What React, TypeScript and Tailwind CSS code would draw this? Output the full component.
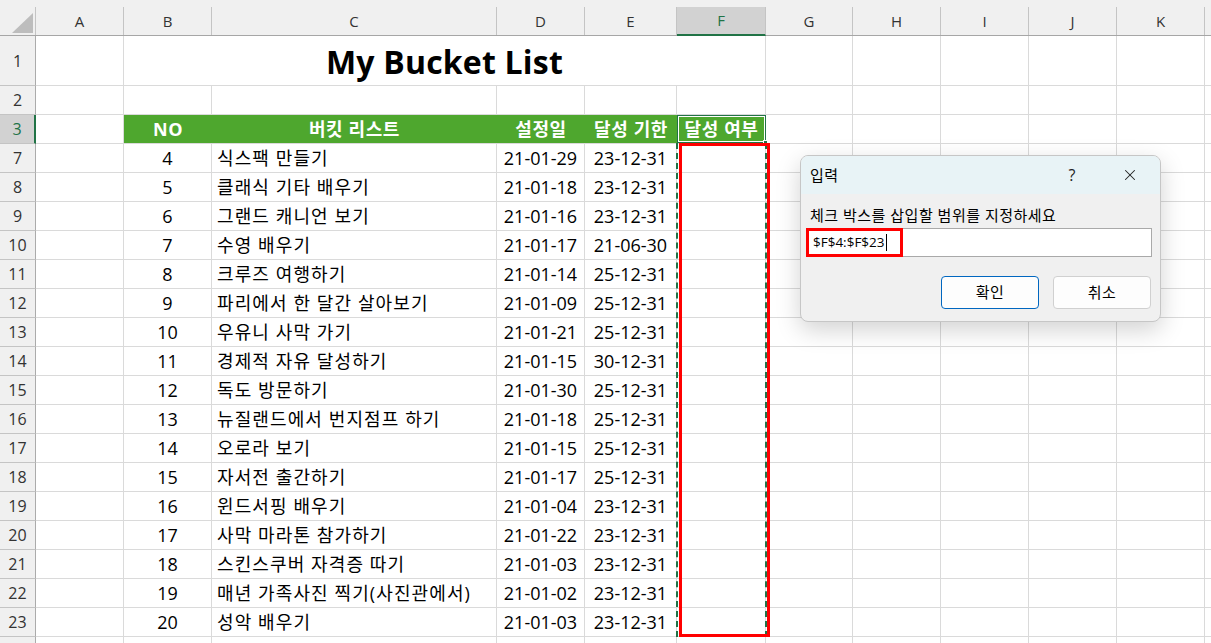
import { X } from 'lucide-react'

// Excel sheet with "Bucket List" table and an input dialog on top

const font = "font-['Open_Sans','Noto_Sans_CJK_KR',sans-serif]"

const headCols = [
  { id: 'A', w: 'w-[88px]' },
  { id: 'B', w: 'w-[88px]' },
  { id: 'C', w: 'w-[285px]' },
  { id: 'D', w: 'w-[88px]' },
  { id: 'E', w: 'w-[92px]' },
  { id: 'F', w: 'w-[89px]' },
  { id: 'G', w: 'w-[87px]' },
  { id: 'H', w: 'w-[88px]' },
  { id: 'I', w: 'w-[88px]' },
  { id: 'J', w: 'w-[88px]' },
  { id: 'K', w: 'w-[88px]' },
]

const rightCols = ['w-[87px]', 'w-[88px]', 'w-[88px]', 'w-[88px]', 'w-[88px]']

const items: [number, number, string, string, string][] = [
  [7, 4, '식스팩 만들기', '21-01-29', '23-12-31'],
  [8, 5, '클래식 기타 배우기', '21-01-18', '23-12-31'],
  [9, 6, '그랜드 캐니언 보기', '21-01-16', '23-12-31'],
  [10, 7, '수영 배우기', '21-01-17', '21-06-30'],
  [11, 8, '크루즈 여행하기', '21-01-14', '25-12-31'],
  [12, 9, '파리에서 한 달간 살아보기', '21-01-09', '25-12-31'],
  [13, 10, '우유니 사막 가기', '21-01-21', '25-12-31'],
  [14, 11, '경제적 자유 달성하기', '21-01-15', '30-12-31'],
  [15, 12, '독도 방문하기', '21-01-30', '25-12-31'],
  [16, 13, '뉴질랜드에서 번지점프 하기', '21-01-18', '25-12-31'],
  [17, 14, '오로라 보기', '21-01-15', '25-12-31'],
  [18, 15, '자서전 출간하기', '21-01-17', '25-12-31'],
  [19, 16, '윈드서핑 배우기', '21-01-04', '23-12-31'],
  [20, 17, '사막 마라톤 참가하기', '21-01-22', '23-12-31'],
  [21, 18, '스킨스쿠버 자격증 따기', '21-01-03', '23-12-31'],
  [22, 19, '매년 가족사진 찍기(사진관에서)', '21-01-02', '23-12-31'],
  [23, 20, '성악 배우기', '21-01-03', '23-12-31'],
]

function RowHead({ n, selected }: { n?: number; selected?: boolean }) {
  return (
    <div
      className={`w-[36px] shrink-0 h-full flex items-center justify-center text-[16px] border-b border-[#c4c4c4] ${
        selected
          ? 'bg-[#d2d2d2] text-[#217346] border-r-2 border-r-[#217346]'
          : 'bg-[#f0f0f0] text-[#333] border-r border-r-[#ababab]'
      }`}
    >
      {n}
    </div>
  )
}

function Cell({ w, children, className = '' }: { w: string; children?: React.ReactNode; className?: string }) {
  return (
    <div className={`${w} shrink-0 h-full border-r border-b border-[#dadada] flex items-center ${className}`}>
      {children}
    </div>
  )
}

function RightCells() {
  return (
    <>
      {rightCols.map((w, i) => (
        <Cell key={i} w={w} />
      ))}
      <div className="flex-1 h-full border-b border-[#dadada]" />
    </>
  )
}

export default function App() {
  return (
    <div className={`relative w-[1211px] h-[643px] overflow-hidden bg-white text-black ${font}`}>
      {/* column headers */}
      <div className="flex h-[36px] bg-[#f0f0f0] border-b border-[#a6a6a6]">
        <div className="w-[36px] shrink-0 flex flex-col">
          <div className="h-[7px]" />
          <div className="flex-1 border-r border-[#c4c4c4] flex items-end justify-end p-[2px]">
            <div className="w-0 h-0 border-l-[21px] border-l-transparent border-b-[20px] border-b-[#bdbdbd]" />
          </div>
        </div>
        {headCols.map((c) => (
          <div key={c.id} className={`${c.w} shrink-0 flex flex-col`}>
            <div className="h-[7px]" />
            <div
              className={`flex-1 flex items-center justify-center text-[15px] border-r border-[#c4c4c4] ${
                c.id === 'F' ? 'bg-[#d2d2d2] text-[#217346] border-b-2 border-b-[#217346] -mb-px' : 'text-[#333]'
              }`}
            >
              {c.id}
            </div>
          </div>
        ))}
        <div className="flex-1 flex flex-col">
          <div className="h-[7px]" />
          <div className="flex-1" />
        </div>
      </div>

      {/* row 1 */}
      <div className="flex h-[50px]">
        <RowHead n={1} />
        <Cell w="w-[88px]" />
        <Cell w="w-[642px]" className="justify-center">
          <span className="text-[32px] font-bold leading-none pt-[2px] tracking-[0.2px]">My Bucket List</span>
        </Cell>
        <RightCells />
      </div>

      {/* row 2 */}
      <div className="flex h-[29px]">
        <RowHead n={2} />
        {headCols.slice(0, 6).map((c) => (
          <Cell key={c.id} w={c.w} />
        ))}
        <RightCells />
      </div>

      {/* row 3 - table header */}
      <div className="flex h-[29px]">
        <RowHead n={3} selected />
        <Cell w="w-[88px]" />
        <div className="flex h-full bg-[#4ea72e] text-white font-bold text-[18px] tracking-[0.6px] border-b border-[#dadada]">
          <div className="w-[88px] flex items-center justify-center">NO</div>
          <div className="w-[285px] flex items-center justify-center">버킷 리스트</div>
          <div className="w-[88px] flex items-center justify-center">설정일</div>
          <div className="w-[92px] flex items-center justify-center">달성 기한</div>
          <div className="relative w-[89px] flex items-center justify-center border border-[#217346] shadow-[inset_0_0_0_1px_#ffffff]">
            달성 여부
            <div className="absolute -right-[3px] -bottom-[3px] w-[5px] h-[5px] bg-[#217346] border border-white" />
          </div>
        </div>
        <RightCells />
      </div>

      {/* data rows */}
      {items.map(([row, no, text, d1, d2]) => (
        <div key={row} className="flex h-[29px] text-[18px]">
          <RowHead n={row} />
          <Cell w="w-[88px]" />
          <Cell w="w-[88px]" className="justify-center">{no}</Cell>
          <Cell w="w-[285px]" className="pl-[5px] whitespace-nowrap tracking-[1.1px]">{text}</Cell>
          <Cell w="w-[88px]" className="justify-center">{d1}</Cell>
          <Cell w="w-[92px]" className="justify-center">{d2}</Cell>
          <Cell w="w-[89px]" />
          <RightCells />
        </div>
      ))}

      {/* partial row 24 */}
      <div className="flex h-[29px]">
        <RowHead />
        {headCols.slice(0, 6).map((c) => (
          <Cell key={c.id} w={c.w} />
        ))}
        <RightCells />
      </div>

      {/* copy marquee + red highlight on F column */}
      <div className="absolute left-[676px] top-[143px] w-[91px] h-[494px] border-x-2 border-dashed border-[#217346]" />
      <div className="absolute left-[679px] top-[143px] w-[91px] h-[494px] border-[3px] border-[#ff0000]" />

      {/* input dialog */}
      <div className="absolute left-[800px] top-[155px] w-[361px] h-[167px] rounded-[8px] border border-[#c6c6c6] bg-[#f0f0f0] overflow-hidden shadow-[0_8px_24px_rgba(0,0,0,0.18)]">
        <div className="h-[38px] bg-[#e8f3f6] flex items-center pl-[9px] text-[15px]">
          <span className="tracking-[0.5px]">입력</span>
          <div className="ml-auto flex items-center">
            <span className="w-[44px] text-center text-[16px] text-[#222]">?</span>
            <div className="w-[44px] ml-[14px] mr-[8px] flex justify-center">
              <X size={18} strokeWidth={1.4} className="text-[#222]" />
            </div>
          </div>
        </div>
        <div className="pt-[11px] px-[5px]">
          <div className="pl-[4px] h-[20px] leading-[20px] text-[15px] tracking-[0.5px]">체크 박스를 삽입할 범위를 지정하세요</div>
          <div className="relative mt-[3px] h-[29px] w-[346px] bg-white border border-[#a9a9a9] flex items-center pl-[6px] text-[13.5px]">
            <span>$F$4:$F$23</span>
            <span className="ml-px w-px h-[17px] bg-black" />
            <div className="absolute -left-px -top-px w-[97px] h-[29px] border-[3px] border-[#ff0000]" />
          </div>
          <div className="mt-[19px] flex justify-end gap-[14px] pr-[4px] text-[15px] tracking-[0.5px]">
            <button className="w-[98px] h-[33px] rounded-[4px] bg-[#fdfdfd] border border-[#0067c0]">확인</button>
            <button className="w-[98px] h-[33px] rounded-[4px] bg-[#fdfdfd] border border-[#d0d0d0]">취소</button>
          </div>
        </div>
      </div>
    </div>
  )
}
